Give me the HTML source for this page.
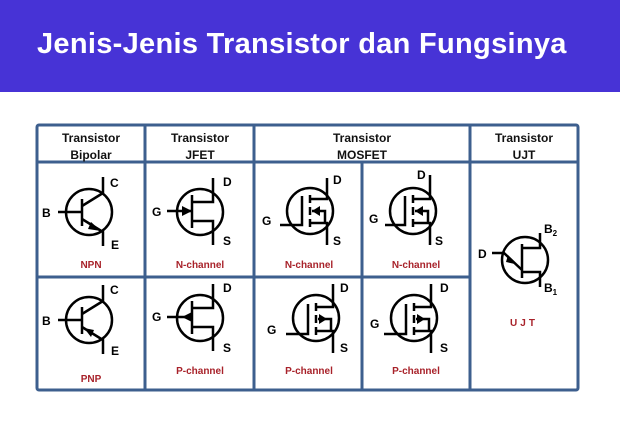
<!DOCTYPE html>
<html><head><meta charset="utf-8"><style>
html,body{margin:0;padding:0;background:#fff;width:620px;height:427px;overflow:hidden}
.ban{position:absolute;left:0;top:0;width:620px;height:92px;background:#4733d6}
.ban div{position:absolute;left:37px;top:28px;color:#fff;font:600 29px "Liberation Sans",sans-serif;letter-spacing:0.3px;white-space:nowrap}
svg{position:absolute;left:0;top:0}
</style></head><body>
<div class="ban"><div>Jenis-Jenis Transistor dan Fungsinya</div></div>
<svg width="620" height="427" viewBox="0 0 620 427" font-family="Liberation Sans, sans-serif">
<g fill="none" stroke="#3d5f8e" stroke-width="3">
<rect x="37" y="125" width="541" height="265" rx="2"/>
<line x1="37" y1="162" x2="578" y2="162"/>
<line x1="37" y1="277" x2="470" y2="277"/>
<line x1="145" y1="125" x2="145" y2="390"/>
<line x1="254" y1="125" x2="254" y2="390"/>
<line x1="362" y1="162" x2="362" y2="390"/>
<line x1="470" y1="125" x2="470" y2="390"/>
</g>
<g font-size="12" font-weight="bold" fill="#111" text-anchor="middle">
<text x="91" y="142">Transistor</text><text x="91" y="159">Bipolar</text>
<text x="200" y="142">Transistor</text><text x="200" y="159">JFET</text>
<text x="362" y="142">Transistor</text><text x="362" y="159">MOSFET</text>
<text x="524" y="142">Transistor</text><text x="524" y="159">UJT</text>
</g>
<g font-size="10" font-weight="bold" fill="#a8222a" text-anchor="middle">
<text x="91" y="268">NPN</text><text x="200" y="268">N-channel</text>
<text x="309" y="268">N-channel</text><text x="416" y="268">N-channel</text>
<text x="91" y="382">PNP</text><text x="200" y="374">P-channel</text>
<text x="309" y="374">P-channel</text><text x="416" y="374">P-channel</text>
<text x="524" y="326" letter-spacing="3">UJT</text>
</g>
<g stroke="#000" stroke-width="2.5" fill="none">
<circle cx="89" cy="212" r="23"/>
<line x1="58" y1="212" x2="82" y2="212"/><line x1="82" y1="199" x2="82" y2="226"/>
<polyline points="82,206 103,193 103,177"/><polyline points="82,219 103,232 103,246"/>
<circle cx="89" cy="320" r="23"/>
<line x1="58" y1="320" x2="82" y2="320"/><line x1="82" y1="307" x2="82" y2="334"/>
<polyline points="82,314 103,301 103,285"/><polyline points="82,327 103,340 103,354"/>
<circle cx="200" cy="212" r="23"/>
<line x1="167" y1="211" x2="192" y2="211"/><line x1="192" y1="195" x2="192" y2="228"/>
<polyline points="192,202 213,202 213,178"/><polyline points="192,221 213,221 213,245"/>
<circle cx="200" cy="318" r="23"/>
<line x1="167" y1="317" x2="192" y2="317"/><line x1="192" y1="301" x2="192" y2="334"/>
<polyline points="192,308 213,308 213,284"/><polyline points="192,327 213,327 213,351"/>
<circle cx="310" cy="211" r="23"/>
<polyline points="280,225 302,225 302,196"/>
<line x1="310" y1="195" x2="310" y2="203"/><line x1="310" y1="207" x2="310" y2="215"/><line x1="310" y1="219" x2="310" y2="227"/>
<polyline points="310,199 327,199 327,178"/><polyline points="310,223 327,223 327,245"/><polyline points="312,211 325,211 325,223"/>
<circle cx="413" cy="211" r="23"/>
<polyline points="385,225 405,225 405,196"/>
<line x1="413" y1="195" x2="413" y2="203"/><line x1="413" y1="207" x2="413" y2="215"/><line x1="413" y1="219" x2="413" y2="227"/>
<polyline points="413,199 430,199 430,175"/><polyline points="413,223 430,223 430,245"/><polyline points="415,211 428,211 428,223"/>
<circle cx="316" cy="318" r="23"/>
<polyline points="286,334 308,334 308,304"/>
<line x1="316" y1="303" x2="316" y2="311"/><line x1="316" y1="315" x2="316" y2="323"/><line x1="316" y1="327" x2="316" y2="335"/>
<polyline points="316,307 333,307 333,284"/><polyline points="316,331 333,331 333,353"/><polyline points="318,319 331,319 331,331"/>
<circle cx="414" cy="318" r="23"/>
<polyline points="384,334 406,334 406,304"/>
<line x1="414" y1="303" x2="414" y2="311"/><line x1="414" y1="315" x2="414" y2="323"/><line x1="414" y1="327" x2="414" y2="335"/>
<polyline points="414,307 431,307 431,284"/><polyline points="414,331 431,331 431,353"/><polyline points="416,319 429,319 429,331"/>
<circle cx="525" cy="260" r="23"/>
<polyline points="492,253 504,253 522,270"/>
<line x1="522" y1="244" x2="522" y2="278"/>
<polyline points="522,248 540,248 540,233"/><polyline points="522,272 540,272 540,287"/>
</g>
<g fill="#000">
<polygon points="101,231 91,222 88,229"/>
<polygon points="84,328 94,330 91,337"/>
<polygon points="192,211 182,206 182,216"/>
<polygon points="182,317 192,312 192,322"/>
<polygon points="312,211 320,206 320,216"/>
<polygon points="415,211 423,206 423,216"/>
<polygon points="327,319 319,314 319,324"/>
<polygon points="425,319 417,314 417,324"/>
<polygon points="515,264 508,255 506,262"/>
</g>
<g font-size="12" font-weight="bold" fill="#000">
<text x="110" y="187">C</text><text x="42" y="217">B</text><text x="111" y="249">E</text>
<text x="110" y="294">C</text><text x="42" y="325">B</text><text x="111" y="355">E</text>
<text x="223" y="186">D</text><text x="152" y="216">G</text><text x="223" y="245">S</text>
<text x="223" y="292">D</text><text x="152" y="321">G</text><text x="223" y="352">S</text>
<text x="333" y="184">D</text><text x="262" y="225">G</text><text x="333" y="245">S</text>
<text x="417" y="179">D</text><text x="369" y="223">G</text><text x="435" y="245">S</text>
<text x="340" y="292">D</text><text x="267" y="334">G</text><text x="340" y="352">S</text>
<text x="440" y="292">D</text><text x="370" y="328">G</text><text x="440" y="352">S</text>
<text x="478" y="258">D</text>
<text x="544" y="233">B<tspan font-size="8" dy="3">2</tspan></text>
<text x="544" y="292">B<tspan font-size="8" dy="3">1</tspan></text>
</g>
</svg>
</body></html>
